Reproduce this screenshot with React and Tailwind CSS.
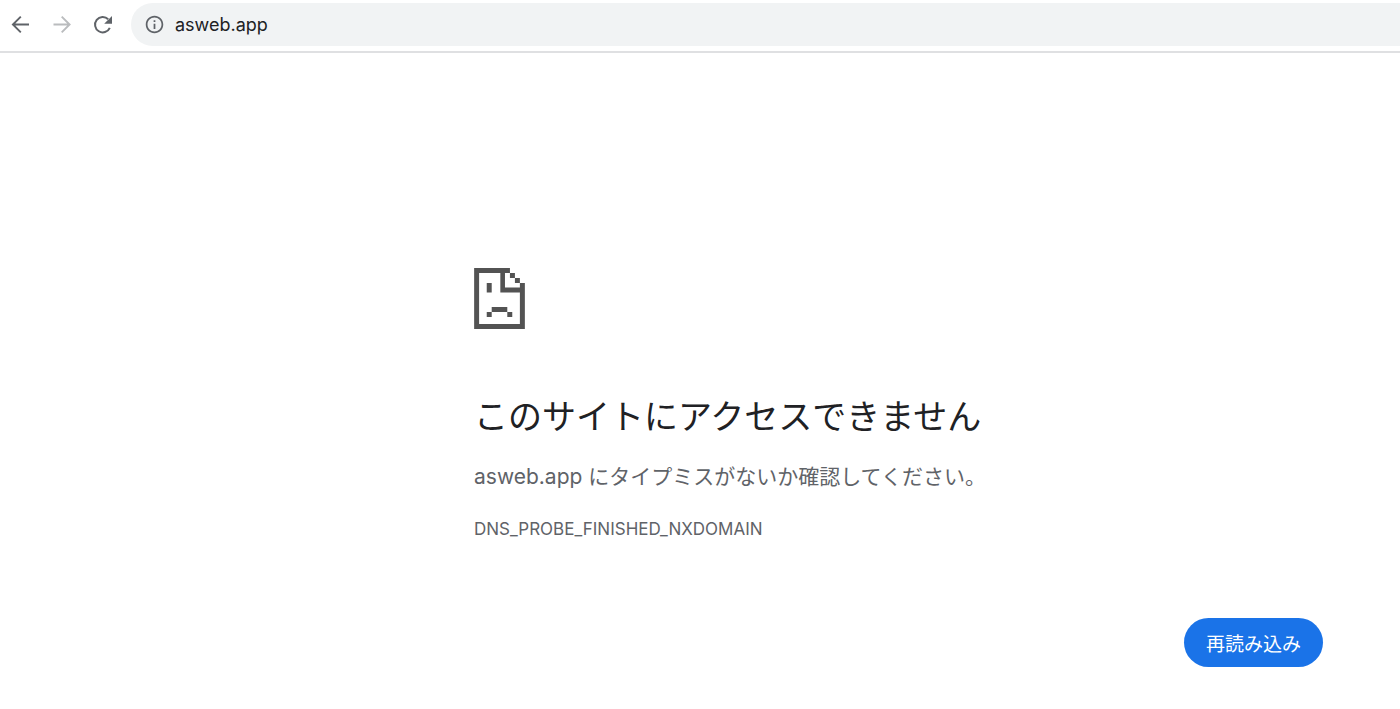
import { useState } from "react";
import { MdInfoOutline } from "react-icons/md";

function ArrowLeft({ className }) {
  return (
    <svg viewBox="0 0 26 26" className={className} fill="none" stroke="currentColor" strokeWidth="1.9">
      <path d="M21 12.5H5M12.8 4.6L4.9 12.5l7.9 7.9" />
    </svg>
  );
}

function ArrowRight({ className }) {
  return (
    <svg viewBox="0 0 26 26" className={className} fill="none" stroke="currentColor" strokeWidth="1.9">
      <path d="M4.5 12.5H20.5M12.7 4.6l7.9 7.9-7.9 7.9" />
    </svg>
  );
}

function Reload({ className }) {
  return (
    <svg viewBox="0 0 26 26" className={className} fill="none">
      <path d="M19.8 15.8A7.7 7.7 0 1 1 18.2 7.2" stroke="currentColor" strokeWidth="2" />
      <path d="M22 4V11.8H14.2Z" fill="currentColor" />
    </svg>
  );
}

function SadPage() {
  return (
    <svg viewBox="0 0 153 184" className="h-[61px] w-[51px]" fill="#535353" aria-hidden="true">
      {/* sheet outline with folded corner */}
      <path d="M0 0H108V15H93V59H138V45H153V184H0ZM15 15V169H138V74H79V15Z" fillRule="evenodd" />
      <path d="M108 15h15v15h-15zM123 30h15v15h-15z" />
      {/* face */}
      <path d="M38 45h15v29H38zM53 118h47v15H53zM38 133h15v15H38zM100 133h15v15h-15z" />
    </svg>
  );
}

function Toolbar() {
  const [url, setUrl] = useState("asweb.app");

  return (
    <header className="flex items-center gap-[15px] border-b-2 border-[#dfe0e2] pt-[3px] pb-[5px] pl-2">
      <button type="button" aria-label="戻る" className="text-[#5f6368]">
        <ArrowLeft className="size-[26px]" />
      </button>
      <button type="button" aria-label="進む" disabled className="text-[#babcbe]">
        <ArrowRight className="size-[26px]" />
      </button>
      <button type="button" aria-label="再読み込み" className="text-[#5f6368]">
        <Reload className="size-[26px]" />
      </button>
      <label className="flex h-[43px] flex-1 items-center gap-[10px] rounded-l-full bg-[#f1f3f4] pl-[13px]">
        <MdInfoOutline className="size-[21px] text-[#5f6368]" />
        <input
          aria-label="アドレス"
          className="flex-1 bg-transparent text-[18px] text-[#202124] outline-none"
          value={url}
          onChange={(e) => setUrl(e.target.value)}
        />
      </label>
    </header>
  );
}

export default function App() {
  return (
    <div className="min-h-screen bg-white font-['Inter','Noto_Sans_CJK_JP',sans-serif] text-[#5f6368]">
      <Toolbar />
      <main className="pt-[215px] pr-[77px] pl-[474px]">
        <SadPage />
        <h1 className="mt-[62px] font-['Noto_Sans_CJK_JP',sans-serif] text-[34px] leading-[48px] text-[#202124]">
          このサイトにアクセスできません
        </h1>
        <p className="mt-[22px] text-[21px] leading-8">
          asweb.app にタイプミスがないか確認してください。
        </p>
        <p className="mt-5 text-[17px] leading-8">DNS_PROBE_FINISHED_NXDOMAIN</p>
        <div className="mt-[73px] flex justify-end">
          <button
            type="button"
            className="h-[49px] rounded-full bg-[#1a73e8] px-[22px] font-['Noto_Sans_CJK_JP',sans-serif] text-[19px] leading-6 text-white"
          >
            再読み込み
          </button>
        </div>
      </main>
    </div>
  );
}
